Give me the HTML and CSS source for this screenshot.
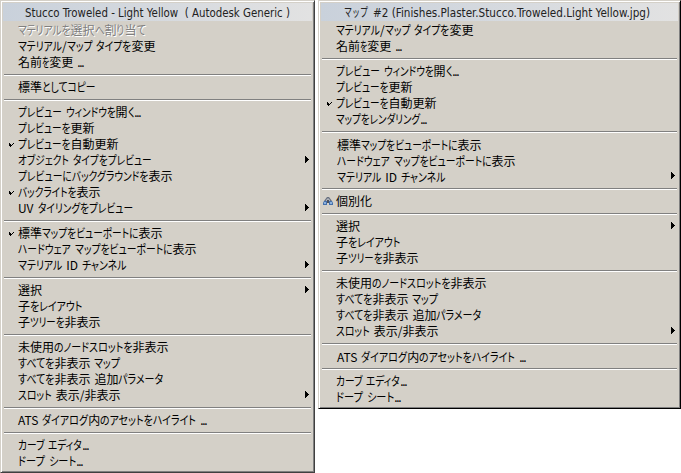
FILE: index.html
```html
<!DOCTYPE html>
<html lang="ja">
<head>
<meta charset="utf-8">
<title>Slate</title>
<link rel="stylesheet" href="styles.css">
</head>
<body>
<main class="menus">
  <ul class="menu menu-material">
    <li class="title"><span class="fit" data-w="265">Stucco Troweled - Light Yellow&nbsp; ( Autodesk Generic )</span></li>
    <li class="item disabled"><span class="label" data-w="127">マテリアルを選択へ割り当て</span></li>
    <li class="item"><span class="label" data-w="137">マテリアル/マップ タイプを変更</span></li>
    <li class="item"><span class="label" data-w="66">名前を変更 ...</span></li>
    <li class="sep"></li>
    <li class="item"><span class="label" data-w="77">標準としてコピー</span></li>
    <li class="sep"></li>
    <li class="item"><span class="label" data-w="123">プレビュー ウィンドウを開く...</span></li>
    <li class="item"><span class="label" data-w="76">プレビューを更新</span></li>
    <li class="item checked"><span class="label" data-w="100">プレビューを自動更新</span></li>
    <li class="item sub"><span class="label" data-w="133">オブジェクト タイプをプレビュー</span></li>
    <li class="item"><span class="label" data-w="154">プレビューにバックグラウンドを表示</span></li>
    <li class="item checked"><span class="label" data-w="82">バックライトを表示</span></li>
    <li class="item sub"><span class="label" data-w="114">UV タイリングをプレビュー</span></li>
    <li class="sep"></li>
    <li class="item checked"><span class="label" data-w="144">標準マップをビューポートに表示</span></li>
    <li class="item"><span class="label" data-w="178">ハードウェア マップをビューポートに表示</span></li>
    <li class="item sub"><span class="label" data-w="108">マテリアル ID チャンネル</span></li>
    <li class="sep"></li>
    <li class="item sub"><span class="label">選択</span></li>
    <li class="item"><span class="label" data-w="64">子をレイアウト</span></li>
    <li class="item"><span class="label" data-w="82">子ツリーを非表示</span></li>
    <li class="sep"></li>
    <li class="item"><span class="label" data-w="150">未使用のノードスロットを非表示</span></li>
    <li class="item"><span class="label" data-w="102">すべてを非表示 マップ</span></li>
    <li class="item"><span class="label" data-w="145">すべてを非表示 追加パラメータ</span></li>
    <li class="item sub"><span class="label" data-w="102">スロット 表示/非表示</span></li>
    <li class="sep"></li>
    <li class="item"><span class="label" data-w="189">ATS ダイアログ内のアセットをハイライト ...</span></li>
    <li class="sep"></li>
    <li class="item"><span class="label" data-w="71">カーブ エディタ...</span></li>
    <li class="item"><span class="label" data-w="65">ドープ シート...</span></li>
  </ul>
  <ul class="menu menu-map">
    <li class="title"><span class="fit" data-w="24">マップ</span><span class="fit rest" data-w="277">#2 (Finishes.Plaster.Stucco.Troweled.Light Yellow.jpg)</span></li>
    <li class="item"><span class="label" data-w="137">マテリアル/マップ タイプを変更</span></li>
    <li class="item"><span class="label" data-w="66">名前を変更 ...</span></li>
    <li class="sep"></li>
    <li class="item"><span class="label" data-w="123">プレビュー ウィンドウを開く...</span></li>
    <li class="item"><span class="label" data-w="76">プレビューを更新</span></li>
    <li class="item checked"><span class="label" data-w="100">プレビューを自動更新</span></li>
    <li class="item"><span class="label" data-w="91">マップをレンダリング...</span></li>
    <li class="sep"></li>
    <li class="item inset"><span class="label" data-w="144">標準マップをビューポートに表示</span></li>
    <li class="item inset"><span class="label" data-w="178">ハードウェア マップをビューポートに表示</span></li>
    <li class="item inset sub"><span class="label" data-w="108">マテリアル ID チャンネル</span></li>
    <li class="sep"></li>
    <li class="item unique"><span class="label">個別化</span></li>
    <li class="sep"></li>
    <li class="item sub"><span class="label">選択</span></li>
    <li class="item"><span class="label" data-w="64">子をレイアウト</span></li>
    <li class="item"><span class="label" data-w="82">子ツリーを非表示</span></li>
    <li class="sep"></li>
    <li class="item"><span class="label" data-w="150">未使用のノードスロットを非表示</span></li>
    <li class="item"><span class="label" data-w="102">すべてを非表示 マップ</span></li>
    <li class="item"><span class="label" data-w="145">すべてを非表示 追加パラメータ</span></li>
    <li class="item sub"><span class="label" data-w="102">スロット 表示/非表示</span></li>
    <li class="sep"></li>
    <li class="item inset"><span class="label" data-w="189">ATS ダイアログ内のアセットをハイライト ...</span></li>
    <li class="sep"></li>
    <li class="item"><span class="label" data-w="71">カーブ エディタ...</span></li>
    <li class="item"><span class="label" data-w="65">ドープ シート...</span></li>
  </ul>
</main>
<script src="menu.js"></script>
</body>
</html>
```
FILE: styles.css
```css
body {
  margin: 0;
  background: #fff;
  font: 12px/16px "Noto Sans CJK JP", sans-serif;
  color: #000;
  overflow: hidden;
}

.menus {
  display: flex;
  align-items: flex-start;
  gap: 3px;
}

.menu {
  box-sizing: border-box;
  margin: 0;
  padding: 2px 2px 3px;
  list-style: none;
  background: #d4d0c8;
  border: 1px solid;
  border-color: #d4d0c8 #404040 #404040 #d4d0c8;
  box-shadow: inset 1px 1px #fff, inset -1px -1px #808080;
}

.menu-material { width: 315px; }

.menu-map {
  width: 363px;
  border-right-color: #000;
  border-bottom-color: #000;
}

.title {
  display: flex;
  height: 18px;
  margin-bottom: 1px;
  padding-left: 22px;
  font: 12px/20px "DejaVu Sans Condensed", "Noto Sans CJK JP", sans-serif;
  color: #222;
  white-space: nowrap;
  background: linear-gradient(90deg, #c9d1db, #e2e2e2);
}

.menu-map .title { padding-left: 23px; }
.rest { margin-left: 5px; }

.item {
  display: flex;
  position: relative;
  height: 16px;
  padding-left: 15px;
  white-space: pre;
}

.inset {
  padding-left: 16px;
  line-height: 18px;
}

.fit, .kana {
  display: inline-block;
  transform-origin: 0 50%;
}

.kana { font-feature-settings: "palt"; }
.dots { letter-spacing: -1.3px; }
.space { display: inline-block; width: 4px; }

.disabled {
  color: #808080;
  text-shadow: 1px 1px #fff;
}

.mark {
  position: absolute;
  left: 6px;
  top: 6px;
}

.arrow {
  position: absolute;
  right: 3px;
  top: 4px;
}

.unique-icon {
  position: absolute;
  left: 2px;
  top: 3px;
}

.sep {
  box-sizing: border-box;
  height: 9px;
  margin: 0 1px;
  padding-top: 4px;
}

.sep::before {
  content: "";
  display: block;
  height: 1px;
  background: #808080;
  border-bottom: 1px solid #fff;
}
```
FILE: menu.js
```js
// Squeeze an inline-block horizontally and give it the squeezed advance.
function squeeze(el, width, natural) {
  el.style.width = width + 'px';
  el.style.transform = 'scaleX(' + width / natural + ')';
}

document.querySelectorAll('.fit').forEach(el => {
  squeeze(el, +el.dataset.w, el.getBoundingClientRect().width);
});

// Kana are set narrower than kanji, as in a proportional UI face.
document.querySelectorAll('.label').forEach(label => {
  const runs = label.textContent.match(/\.{3}|[\u3040-\u30ff]+| |[^\u3040-\u30ff .]+/g);
  label.textContent = '';
  runs.forEach(text => {
    const span = document.createElement('span');
    span.textContent = text;
    if (/[\u3040-\u30ff]/.test(text)) span.className = 'kana';
    else if (text === '...') span.className = 'dots';
    else if (text === ' ') span.className = 'space';
    label.appendChild(span);
  });
  const kana = [...label.querySelectorAll('.kana')];
  if (!label.dataset.w || !kana.length) return;
  const widths = kana.map(k => k.getBoundingClientRect().width);
  const sum = widths.reduce((a, b) => a + b, 0);
  const fixed = label.getBoundingClientRect().width - sum;
  const slack = label.querySelector('.dots') ? -0.7 : 0.5;
  const scale = (+label.dataset.w + slack - fixed) / sum;
  kana.forEach((k, i) => squeeze(k, widths[i] * scale, widths[i]));
});

const icons = {
  checked: '<svg class="mark" width="5" height="5" shape-rendering="crispEdges"><path d="M0 1h1v1h1v1h1v-1h1v-1h1v1h-1v1h-1v1h-1v1h-1v-1h-1z"/></svg>',
  sub: '<svg class="arrow" width="4" height="7" shape-rendering="crispEdges"><path d="M0 0h1v1h1v1h1v1h1v1h-1v1h-1v1h-1v1h-1z"/></svg>',
  unique: '<svg class="unique-icon" width="10" height="10"><path d="M1 5L4 1h2L9 5v2H1z" fill="#687080"/><path d="M3 4l2-2 2 2v1H3z" fill="#b2b6bc"/><path d="M4 4h2v3H4z" fill="#4c5260"/><path d="M1 5h3v4H0V7z M6 5h3l1 2v2H6z" fill="#4470ac"/><path d="M1 6h2v2H1zM7 6h2v2H7z" fill="#8cb0dc"/></svg>'
};
for (const name in icons) {
  document.querySelectorAll('.item.' + name).forEach(el => el.insertAdjacentHTML('beforeend', icons[name]));
}
```
